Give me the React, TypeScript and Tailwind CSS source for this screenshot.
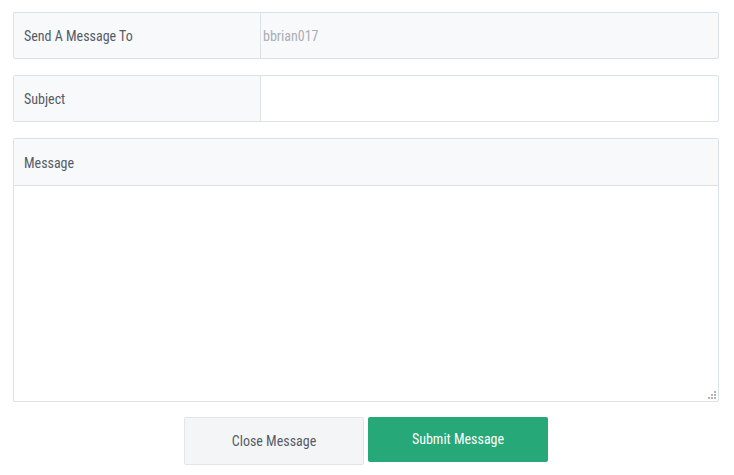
export default function App() {
    const font = {fontFamily: '"Liberation Sans Narrow", "Roboto Condensed", "Liberation Sans", sans-serif'};

    return (
        <div className="bg-white w-[734px] h-[475px] pt-[12px] pl-[13px]" style={font}>
            <div className="w-[706px] flex flex-col">
                <div className="flex h-[47px] border border-[#d9e2e7] rounded-[2px] bg-[#f8f9fb]">
                    <div className="w-[247px] border-r border-[#d9e2e7] flex items-center pl-[10px] pt-[2px] text-[14px] text-[#555c66]">
                        Send A Message To
                    </div>
                    <div className="flex-1 flex items-center pl-[2px] pt-[2px] text-[14px] text-[#a9aeb4]">
                        bbrian017
                    </div>
                </div>

                <div className="mt-4 flex h-[47px] border border-[#d9e2e7] rounded-[2px] bg-white">
                    <div className="w-[247px] border-r border-[#d9e2e7] bg-[#f8f9fb] flex items-center pl-[10px] pt-[2px] text-[14px] text-[#555c66]">
                        Subject
                    </div>
                    <input className="flex-1 outline-none px-2 text-[14px]"/>
                </div>

                <div className="mt-4 relative flex flex-col h-[264px] border border-[#d9e2e7] rounded-[2px]">
                    <div className="h-[47px] border-b border-[#d9e2e7] bg-[#f8f9fb] flex items-center pl-[10px] pt-[2px] text-[14px] text-[#555c66]">
                        Message
                    </div>
                    <textarea className="flex-1 outline-none resize-none p-2 text-[14px]"/>
                    <svg className="absolute right-[2px] bottom-[2px]" width="8" height="8" viewBox="0 0 8 8">
                        <rect x="6" y="0" width="2" height="2" fill="#b5b5b5"/>
                        <rect x="3" y="3" width="2" height="2" fill="#b5b5b5"/>
                        <rect x="6" y="3" width="2" height="2" fill="#b5b5b5"/>
                        <rect x="0" y="6" width="2" height="2" fill="#b5b5b5"/>
                        <rect x="3" y="6" width="2" height="2" fill="#b5b5b5"/>
                        <rect x="6" y="6" width="2" height="2" fill="#b5b5b5"/>
                    </svg>
                </div>

                <div className="mt-[15px] flex justify-center items-start gap-[4px]">
                    <button className="w-[180px] h-[48px] bg-[#f4f5f7] border border-[#e1e5e9] rounded-[2px] text-[14px] text-[#555c66]">
                        Close Message
                    </button>
                    <button className="w-[180px] h-[45px] bg-[#26a878] rounded-[2px] text-[14px] text-white">
                        Submit Message
                    </button>
                </div>
            </div>
        </div>
    );
}
